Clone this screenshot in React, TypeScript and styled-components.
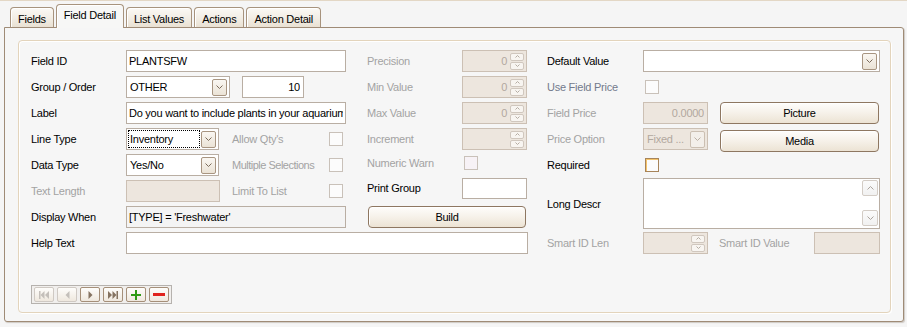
import styled, { createGlobalStyle, css } from 'styled-components';

const GlobalStyle = createGlobalStyle`
  html, body {
    margin: 0;
    padding: 0;
    background: #f5f5f5;
  }
  body {
    font-family: "Liberation Sans", Tahoma, Arial, sans-serif;
    font-size: 11px;
    letter-spacing: -0.25px;
    color: #000;
  }
  * {
    box-sizing: border-box;
  }
`;

type ChevronProps = { up?: boolean; color?: string; small?: boolean };

const Chevron = ({ up = false, color = '#7b6b5b', small = false }: ChevronProps) => {
  const w = small ? 5 : 7;
  const h = small ? 3 : 4;
  const pts = up
    ? `0.5,${h - 0.5} ${w / 2},0.5 ${w - 0.5},${h - 0.5}`
    : `0.5,0.5 ${w / 2},${h - 0.5} ${w - 0.5},0.5`;
  return (
    <svg width={w} height={h} viewBox={`0 0 ${w} ${h}`}>
      <polyline points={pts} fill="none" stroke={color} strokeWidth="1" />
    </svg>
  );
};

const Select = ({ w, value, focused, disabled }: { w: number; value: string; focused?: boolean; disabled?: boolean }) => (
  <SelectBox $w={w} $disabled={disabled}>
    <SelectText $focused={focused} $disabled={disabled}>{value}</SelectText>
    <DropButton $disabled={disabled}>
      <Chevron color={disabled ? '#bbb0a5' : '#7b6b5b'} />
    </DropButton>
  </SelectBox>
);

const Spin = ({ w = 65, value }: { w?: number; value: string }) => (
  <SpinBox $w={w}>
    <SpinValue>{value}</SpinValue>
    <SpinButtons>
      <SpinBtn>
        <Chevron up small color="#b5aca3" />
      </SpinBtn>
      <SpinBtn>
        <Chevron small color="#b5aca3" />
      </SpinBtn>
    </SpinButtons>
  </SpinBox>
);

const navColor = (off: boolean) => (off ? '#c4bfba' : '#857361');

const FirstIcon = ({ off }: { off: boolean }) => (
  <svg width="10" height="8" viewBox="0 0 10 8" fill={navColor(off)}>
    <rect x="0" y="0" width="1.5" height="8" />
    <polygon points="5.5,0 1.5,4 5.5,8" />
    <polygon points="10,0 6,4 10,8" />
  </svg>
);

const PrevIcon = ({ off }: { off: boolean }) => (
  <svg width="5" height="8" viewBox="0 0 5 8" fill={navColor(off)}>
    <polygon points="4.5,0 0.5,4 4.5,8" />
  </svg>
);

const NextIcon = ({ off }: { off: boolean }) => (
  <svg width="5" height="8" viewBox="0 0 5 8" fill={navColor(off)}>
    <polygon points="0.5,0 4.5,4 0.5,8" />
  </svg>
);

const LastIcon = ({ off }: { off: boolean }) => (
  <svg width="10" height="8" viewBox="0 0 10 8" fill={navColor(off)}>
    <polygon points="0,0 4,4 0,8" />
    <polygon points="4.5,0 8.5,4 4.5,8" />
    <rect x="8.5" y="0" width="1.5" height="8" />
  </svg>
);

const PlusIcon = () => (
  <svg width="10" height="10" viewBox="0 0 10 10" fill="#2f9a14" shapeRendering="crispEdges">
    <rect x="0" y="4" width="10" height="2" />
    <rect x="4" y="0" width="2" height="10" />
  </svg>
);

const MinusIcon = () => (
  <svg width="12" height="3" viewBox="0 0 12 3" fill="#e0231d" shapeRendering="crispEdges">
    <rect x="0" y="0" width="12" height="3" />
  </svg>
);

const App = () => {
  const tabs = ['Fields', 'Field Detail', 'List Values', 'Actions', 'Action Detail'];

  return (
    <Window>
      <GlobalStyle />
      <TabStrip>
        {tabs.map((t) => (
          <Tab key={t} $active={t === 'Field Detail'}>
            {t}
          </Tab>
        ))}
      </TabStrip>
      <Panel>
        <GroupBox>
          <FormGrid>
            {/* row 1 */}
            <Label $c={1} $r={1}>Field ID</Label>
            <Cell $c={2} $r={1}>
              <TextInput $w={220} defaultValue="PLANTSFW" />
            </Cell>
            <Label $c={4} $r={1} $muted>Precision</Label>
            <Cell $c={5} $r={1}>
              <Spin value="0" />
            </Cell>
            <Label $c={7} $r={1}>Default Value</Label>
            <Cell $c={8} $r={1}>
              <Select w={237} value="" />
            </Cell>

            {/* row 2 */}
            <Label $c={1} $r={2}>Group / Order</Label>
            <Cell $c={2} $r={2} $gap={12}>
              <Select w={104} value="OTHER" />
              <TextInput $w={62} $right defaultValue="10" />
            </Cell>
            <Label $c={4} $r={2} $muted>Min Value</Label>
            <Cell $c={5} $r={2}>
              <Spin value="0" />
            </Cell>
            <Label $c={7} $r={2} $tone="link">Use Field Price</Label>
            <Cell $c={8} $r={2}>
              <Check $pad={2} />
            </Cell>

            {/* row 3 */}
            <Label $c={1} $r={3}>Label</Label>
            <Cell $c={2} $r={3}>
              <TextInput $w={220} defaultValue="Do you want to include plants in your aquarium?" />
            </Cell>
            <Label $c={4} $r={3} $muted>Max Value</Label>
            <Cell $c={5} $r={3}>
              <Spin value="0" />
            </Cell>
            <Label $c={7} $r={3} $muted>Field Price</Label>
            <Cell $c={8} $r={3} $gap={12}>
              <TextInput $w={65} $right $disabled readOnly defaultValue="0.0000" />
              <PushButton $w={159}>Picture</PushButton>
            </Cell>

            {/* row 4 */}
            <Label $c={1} $r={4}>Line Type</Label>
            <Cell $c={2} $r={4} $gap={13}>
              <Select w={93} value="Inventory" focused />
              <InlineLabel>Allow Qty's</InlineLabel>
              <Check $end />
            </Cell>
            <Label $c={4} $r={4} $muted>Increment</Label>
            <Cell $c={5} $r={4}>
              <Spin value="" />
            </Cell>
            <Label $c={7} $r={4} $muted>Price Option</Label>
            <Cell $c={8} $r={4} $gap={12}>
              <Select w={65} value="Fixed ..." disabled />
              <PushButton $w={159} $drop={2}>Media</PushButton>
            </Cell>

            {/* row 5 */}
            <Label $c={1} $r={5}>Data Type</Label>
            <Cell $c={2} $r={5} $gap={13}>
              <Select w={93} value="Yes/No" />
              <InlineLabel $tight>Multiple Selections</InlineLabel>
              <Check $end />
            </Cell>
            <Label $c={4} $r={5} $muted $lift={2}>Numeric Warn</Label>
            <Cell $c={5} $r={5} $lift={2}>
              <Check $pad={2} $tint="#f7f2f6" />
            </Cell>
            <Label $c={7} $r={5}>Required</Label>
            <Cell $c={8} $r={5}>
              <Check $pad={2} $tone="focus" />
            </Cell>

            {/* row 6 */}
            <Label $c={1} $r={6} $muted>Text Length</Label>
            <Cell $c={2} $r={6} $gap={12}>
              <TextInput $w={94} $disabled readOnly defaultValue="" />
              <InlineLabel>Limit To List</InlineLabel>
              <Check $end />
            </Cell>
            <Label $c={4} $r={6} $lift={3}>Print Group</Label>
            <Cell $c={5} $r={6} $lift={3}>
              <TextInput $w={65} $h={21} defaultValue="" />
            </Cell>
            <Label $c={7} $r={6} $rs={2}>Long Descr</Label>
            <Cell $c={8} $r={6} $rs={2}>
              <MemoBox>
                <MemoText />
                <ScrollCol>
                  <ScrollBtn>
                    <Chevron up color="#aaa39c" />
                  </ScrollBtn>
                  <ScrollBtn>
                    <Chevron color="#aaa39c" />
                  </ScrollBtn>
                </ScrollCol>
              </MemoBox>
            </Cell>

            {/* row 7 */}
            <Label $c={1} $r={7}>Display When</Label>
            <Cell $c={2} $r={7}>
              <TextInput $w={220} $readonlyLook readOnly defaultValue="[TYPE] = 'Freshwater'" />
            </Cell>
            <Cell $c={4} $r={7} $cs={2}>
              <PushButton $w={158} $indent={1}>Build</PushButton>
            </Cell>

            {/* row 8 */}
            <Label $c={1} $r={8}>Help Text</Label>
            <Cell $c={2} $r={8} $cs={4}>
              <TextInput $w={402} defaultValue="" />
            </Cell>
            <Label $c={7} $r={8} $muted>Smart ID Len</Label>
            <Cell $c={8} $r={8}>
              <Spin value="" />
              <InlineLabel $indent={11}>Smart ID Value</InlineLabel>
              <TextInput $w={66} $disabled readOnly defaultValue="" />
            </Cell>
          </FormGrid>

          <NavBar>
            <NavButton $off>
              <FirstIcon off />
            </NavButton>
            <NavButton $off>
              <PrevIcon off />
            </NavButton>
            <NavButton>
              <NextIcon off={false} />
            </NavButton>
            <NavButton>
              <LastIcon off={false} />
            </NavButton>
            <NavButton>
              <PlusIcon />
            </NavButton>
            <NavButton>
              <MinusIcon />
            </NavButton>
          </NavBar>
        </GroupBox>
      </Panel>
    </Window>
  );
};

// Styled components
type Place = { $c: number; $r: number; $cs?: number; $rs?: number; $lift?: number };

const place = css<Place>`
  grid-column: ${(p) => p.$c} / span ${(p) => p.$cs ?? 1};
  grid-row: ${(p) => p.$r} / span ${(p) => p.$rs ?? 1};
  margin-top: ${(p) => -(p.$lift ?? 0) * 2}px;
`;

const Window = styled.div`
  width: 907px;
  height: 327px;
  border-top: 1px solid #e3d7c5;
  padding: 3px 3px 0 4px;
  background: #f5f5f5;
  overflow: hidden;
`;

const TabStrip = styled.div`
  display: flex;
  align-items: flex-end;
  gap: 2px;
  height: 24px;
  padding-left: 6px;
  margin-bottom: -1px;
  position: relative;
  z-index: 1;
`;

const Tab = styled.div<{ $active?: boolean }>`
  height: ${(p) => (p.$active ? 24 : 20)}px;
  margin-bottom: ${(p) => (p.$active ? 0 : 1)}px;
  padding: ${(p) => (p.$active ? '0 7px 3px' : '2px 7px 0')};
  display: flex;
  align-items: center;
  border: 1px solid #a7937d;
  border-bottom: none;
  border-radius: 4px 4px 0 0;
  background: ${(p) =>
    p.$active ? '#f7f7f6' : 'linear-gradient(#fbf9f5 0%, #f2ede4 55%, #e9e1d3 100%)'};
  box-shadow: inset 1px 1px 0 #fff;
  white-space: nowrap;
`;

const Panel = styled.div`
  height: 295px;
  border: 1px solid #9f8b76;
  border-radius: 0 3px 3px 3px;
  box-shadow: 1px 1px 1px rgba(90, 70, 50, 0.25);
  background: #f6f6f6;
  padding: 12px 12px 8px 13px;
`;

const GroupBox = styled.div`
  height: 273px;
  border: 1px solid #e3d4bc;
  border-radius: 4px;
  box-shadow: inset 1px 1px 0 #fff, 1px 1px 0 #fff;
  padding: 7px 12px 8px 12px;
`;

const FormGrid = styled.div`
  display: grid;
  grid-template-columns: 95px 220px 21px 95px 65px 20px 96px 237px;
  grid-template-rows: repeat(8, 26px);
`;

const Label = styled.div<Place & { $muted?: boolean; $tone?: 'link' }>`
  ${place};
  align-self: center;
  white-space: nowrap;
  color: ${(p) => (p.$muted ? '#a3a3a3' : p.$tone === 'link' ? '#737a8c' : '#000')};
`;

const Cell = styled.div<Place & { $gap?: number }>`
  ${place};
  display: flex;
  align-items: center;
  gap: ${(p) => p.$gap ?? 0}px;
  min-width: 0;
`;

const InlineLabel = styled.span<{ $indent?: number; $tight?: boolean }>`
  flex: 1;
  min-width: 0;
  color: #a3a3a3;
  white-space: nowrap;
  letter-spacing: ${(p) => (p.$tight ? '-0.5px' : 'inherit')};
  margin-left: ${(p) => p.$indent ?? 0}px;
`;

const TextInput = styled.input<{
  $w: number;
  $h?: number;
  $right?: boolean;
  $disabled?: boolean;
  $readonlyLook?: boolean;
}>`
  flex: none;
  width: ${(p) => p.$w}px;
  height: ${(p) => p.$h ?? 22}px;
  margin: 0;
  padding: 0 ${(p) => (p.$right ? 3 : 2)}px;
  font: inherit;
  letter-spacing: inherit;
  text-align: ${(p) => (p.$right ? 'right' : 'left')};
  color: ${(p) => (p.$disabled ? '#b2a89e' : '#000')};
  border: 1px solid ${(p) => (p.$disabled ? '#ccc0b4' : '#b9aea3')};
  background: ${(p) => (p.$disabled ? '#ede6de' : p.$readonlyLook ? '#f4f4f4' : '#fff')};
  border-radius: 0;
  outline: none;
`;

const SelectBox = styled.div<{ $w: number; $disabled?: boolean }>`
  flex: none;
  width: ${(p) => p.$w}px;
  height: 22px;
  display: flex;
  align-items: center;
  gap: 1px;
  padding: 1px;
  border: 1px solid ${(p) => (p.$disabled ? '#ccc0b4' : '#b9aea3')};
  background: ${(p) => (p.$disabled ? '#ede6de' : '#fff')};
`;

const SelectText = styled.div<{ $focused?: boolean; $disabled?: boolean }>`
  flex: 1;
  min-width: 0;
  height: 18px;
  line-height: 16px;
  padding: 0 1px;
  border: 1px dotted ${(p) => (p.$focused ? '#000' : 'transparent')};
  color: ${(p) => (p.$disabled ? '#b2a89e' : '#000')};
  white-space: nowrap;
  overflow: hidden;
`;

const DropButton = styled.div<{ $disabled?: boolean }>`
  flex: none;
  width: 15px;
  height: 17px;
  margin-right: 1px;
  display: flex;
  align-items: center;
  justify-content: center;
  border: 1px solid ${(p) => (p.$disabled ? '#cbbfb2' : '#a89581')};
  border-radius: 2px;
  background: ${(p) =>
    p.$disabled ? '#f3efea' : 'linear-gradient(#faf7f2, #ebe3d6)'};
`;

const SpinBox = styled.div<{ $w: number }>`
  flex: none;
  width: ${(p) => p.$w}px;
  height: 22px;
  display: flex;
  align-items: center;
  padding: 1px 1px 1px 2px;
  border: 1px solid #ccc0b4;
  background: #ede6de;
`;

const SpinValue = styled.div`
  flex: 1;
  text-align: right;
  padding-right: 3px;
  color: #b2a89e;
`;

const SpinButtons = styled.div`
  display: flex;
  flex-direction: column;
  gap: 1px;
  margin-right: 1px;
`;

const SpinBtn = styled.div`
  width: 14px;
  height: 8px;
  display: flex;
  align-items: center;
  justify-content: center;
  border: 1px solid #d0c7be;
  border-radius: 2px;
  background: #f8f5f1;
`;

const Check = styled.span<{ $end?: boolean; $pad?: number; $tint?: string; $tone?: 'focus' }>`
  flex: none;
  width: 14px;
  height: 14px;
  margin-left: ${(p) => p.$pad ?? 0}px;
  margin-right: ${(p) => (p.$end ? 3 : 0)}px;
  border: 1px solid ${(p) => (p.$tone === 'focus' ? '#a7845a' : '#c9c1b9')};
  background: ${(p) => p.$tint ?? '#fcfcfc'};
  box-shadow: ${(p) => (p.$tone === 'focus' ? 'inset 1px 1px 0 #f5c46a' : 'none')};
`;

const PushButton = styled.div<{ $w: number; $indent?: number; $drop?: number }>`
  flex: none;
  width: ${(p) => p.$w}px;
  height: 22px;
  margin-left: ${(p) => p.$indent ?? 0}px;
  margin-top: ${(p) => (p.$drop ?? 0) * 2}px;
  display: flex;
  align-items: center;
  justify-content: center;
  border: 1px solid #8e7761;
  border-radius: 4px;
  background: linear-gradient(#fefdfb 0%, #f6f1e9 50%, #ece3d4 100%);
  box-shadow: inset 1px 1px 0 #fff;
  cursor: pointer;
`;

const MemoBox = styled.div`
  width: 237px;
  height: 51px;
  align-self: flex-start;
  display: flex;
  border: 1px solid #b9aea3;
  background: #fff;
`;

const MemoText = styled.div`
  flex: 1;
`;

const ScrollCol = styled.div`
  width: 17px;
  display: flex;
  flex-direction: column;
  justify-content: space-between;
  padding: 1px 1px 2px 0;
`;

const ScrollBtn = styled.div`
  width: 16px;
  height: 16px;
  display: flex;
  align-items: center;
  justify-content: center;
  border: 1px solid #d3ccc5;
  border-radius: 2px;
  background: linear-gradient(#fbfbfb, #f1f1f1);
`;

const NavBar = styled.div`
  display: inline-flex;
  gap: 3px;
  margin-top: 29px;
  padding: 1px 2px;
  border: 1px solid #b6b2ae;
  background: #f1efed;
`;

const NavButton = styled.div<{ $off?: boolean }>`
  width: 20px;
  height: 15px;
  display: flex;
  align-items: center;
  justify-content: center;
  border: 1px solid ${(p) => (p.$off ? '#cfc9c3' : '#a58f79')};
  border-radius: 2px;
  background: linear-gradient(#fefdfb, #efe8de);
`;

export default App;
